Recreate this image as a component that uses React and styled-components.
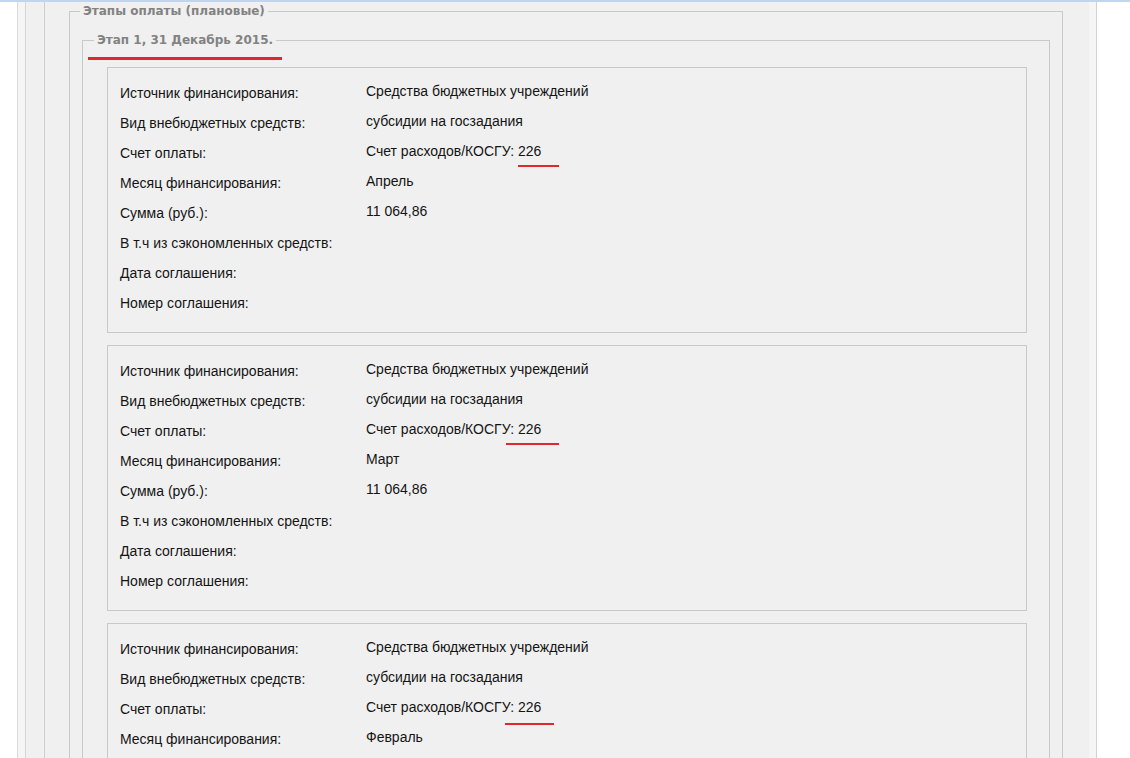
import React from 'react'
import styled, { createGlobalStyle } from 'styled-components'

const GlobalStyle = createGlobalStyle`
  *, *::before, *::after {
    box-sizing: border-box;
  }
  html, body {
    margin: 0;
    padding: 0;
    background: #ffffff;
    overflow: hidden;
  }
  body {
    font-family: 'Liberation Sans', Arial, sans-serif;
  }
`

const TopLine = styled.div`
  height: 2px;
  background: #c3d5ec;
`

const Shell = styled.div`
  margin-left: 17px;
  width: 1080px;
  height: 756px;
  border-left: 1px solid #dadada;
  border-right: 1px solid #d2d2d2;
  background: #f5f5f5;
  padding: 0 7px 0 7px;
`

const Panel = styled.div`
  height: 100%;
  border-left: 1px solid #d6d6d6;
  background: #f0f0f0;
  padding-left: 18px;
`

const Column = styled.div`
  height: 100%;
  border-left: 1px solid #cfcfcf;
  padding: 1px 26px 0 24px;
`

const Group = styled.fieldset`
  position: relative;
  margin: 0;
  border: 1px solid #c9c9c9;
  padding: ${p => p.$pad};
  min-width: 0;
`

const Legend = styled.legend`
  margin-left: ${p => p.$offset}px;
  padding: 0 3px;
  font-family: Tahoma, 'DejaVu Sans', sans-serif;
  font-weight: bold;
  font-size: 12px;
  line-height: 16px;
  color: #828282;
`

const Annotation = styled.div`
  position: absolute;
  left: 5px;
  top: 9px;
  width: 194px;
  height: 3px;
  background: #e0262e;
`

const Card = styled.div`
  border: 1px solid #c9c9c9;
  padding: 10px 12px 14px 12px;
  & + & {
    margin-top: 12px;
  }
`

const Row = styled.div`
  display: grid;
  grid-template-columns: 246px 1fr;
  height: 30px;
  line-height: 30px;
  font-size: 14px;
  color: #141414;
`

const Label = styled.div``

const Value = styled.div`
  margin-top: -2px;
`

const Code = styled.span`
  position: relative;
  &::after {
    content: '';
    position: absolute;
    left: ${p => p.$left}px;
    width: ${p => p.$width}px;
    top: ${p => p.$top}px;
    height: 2px;
    background: #e0262e;
  }
`

const fields = [
  'Источник финансирования:',
  'Вид внебюджетных средств:',
  'Счет оплаты:',
  'Месяц финансирования:',
  'Сумма (руб.):',
  'В т.ч из сэкономленных средств:',
  'Дата соглашения:',
  'Номер соглашения:',
]

const payments = [
  { month: 'Апрель', sum: '11 064,86', mark: { left: 0, width: 41, top: 22 } },
  { month: 'Март', sum: '11 064,86', mark: { left: -12, width: 53, top: 22 } },
  { month: 'Февраль', sum: '11 064,86', mark: { left: -13, width: 49, top: 24 } },
]

function PaymentCard({ month, sum, mark }) {
  const values = [
    'Средства бюджетных учреждений',
    'субсидии на госзадания',
    <>
      Счет расходов/КОСГУ: <Code $left={mark.left} $width={mark.width} $top={mark.top}>226</Code>
    </>,
    month,
    sum,
    '',
    '',
    '',
  ]
  return (
    <Card>
      {fields.map((f, i) => (
        <Row key={f}>
          <Label>{f}</Label>
          <Value>{values[i]}</Value>
        </Row>
      ))}
    </Card>
  )
}

export default function App() {
  return (
    <>
      <GlobalStyle />
      <TopLine />
      <Shell>
        <Panel>
          <Column>
            <Group $pad="13px 12px 0 12px">
              <Legend $offset={-2}>Этапы оплаты (плановые)</Legend>
              <Group $pad="19px 22px 0 24px">
                <Legend $offset={-13}>Этап 1, 31 Декабрь 2015.</Legend>
                <Annotation />
                {payments.map((p, i) => (
                  <PaymentCard key={i} {...p} />
                ))}
              </Group>
            </Group>
          </Column>
        </Panel>
      </Shell>
    </>
  )
}
